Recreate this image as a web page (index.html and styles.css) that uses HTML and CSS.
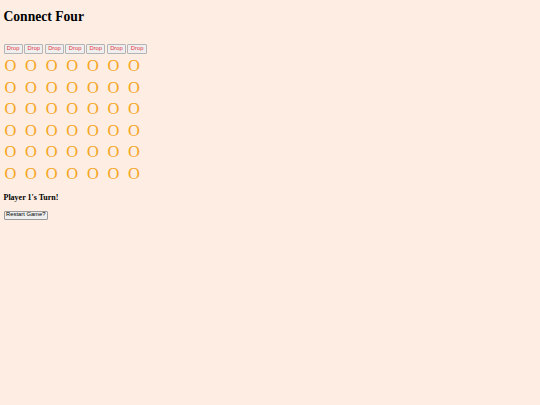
FILE: index.html
```html
<!DOCTYPE html>
<html lang="en">
<head>
    <meta charset="UTF-8">
    <meta name="viewport" content="width=device-width, initial-scale=1.0">
    <title>Connect Four</title>
    <link rel="stylesheet" href="styles.css">
</head>
<body>
    <h1 class="title">Connect Four</h1>

    <!-- drop buttons, one per column -->
    <div class="drops">
        <button class="drop">Drop</button>
        <button class="drop">Drop</button>
        <button class="drop">Drop</button>
        <button class="drop">Drop</button>
        <button class="drop">Drop</button>
        <button class="drop">Drop</button>
        <button class="drop">Drop</button>
    </div>

    <!-- board: 6 rows x 7 columns -->
    <div class="board" id="board"></div>

    <h3 class="turn">Player 1's Turn!</h3>
    <button class="restart">Restart Game?</button>

    <script>
        const board = document.getElementById('board');
        for (let i = 0; i < 6 * 7; i++) {
            const cell = document.createElement('span');
            cell.className = 'cell';
            cell.textContent = 'O';
            board.appendChild(cell);
        }
    </script>
</body>
</html>
```

FILE: styles.css
```css
/* page */
body {
    margin: 0;
    padding: 0 3.5px;
    background-color: #fdede3;
    font-family: 'Liberation Serif', 'Times New Roman', serif;
    color: #000;
}

.title {
    font-size: 13.6px;
    font-weight: bold;
    margin: 9px 0 0 0;
    line-height: 15.5px;
}

/* drop buttons */
.drops {
    display: grid;
    grid-template-columns: repeat(7, 20.67px);
    margin-top: 19.5px;
}

.drop {
    width: 19.3px;
    height: 9.5px;
    padding: 0;
    font-family: 'Liberation Sans', Arial, sans-serif;
    font-size: 5.8px;
    line-height: 1;
    color: #e3303a;
    background-color: #efefef;
    border: 1px solid #b4b4b4;
    border-radius: 1px;
}

/* board */
.board {
    display: grid;
    grid-template-columns: repeat(7, 20.6px);
    grid-auto-rows: 21.6px;
    margin-top: 1.5px;
}

.cell {
    font-size: 16.4px;
    line-height: 21.6px;
    color: #f5a623;
    padding-left: 1px;
}

.turn {
    font-size: 8px;
    font-weight: bold;
    line-height: 9px;
    margin: 8px 0 9px 0;
}

.restart {
    display: block;
    width: 44.5px;
    height: 9px;
    padding: 0;
    font-family: 'Liberation Sans', Arial, sans-serif;
    font-size: 5.8px;
    line-height: 1;
    color: #000;
    background-color: #efefef;
    border: 1px solid #9a9a9a;
    border-radius: 1px;
}
```
